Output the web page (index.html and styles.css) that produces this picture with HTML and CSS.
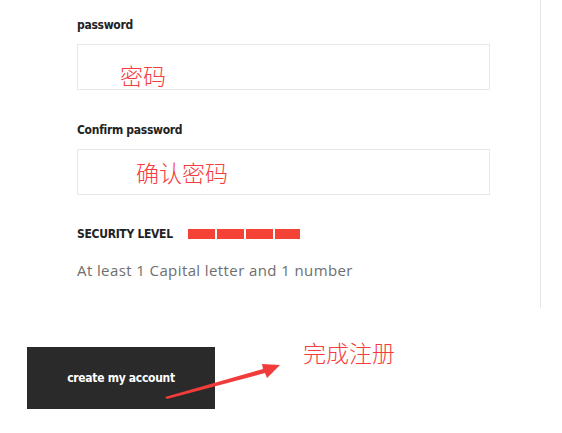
FILE: index.html
```html
<!DOCTYPE html>
<html lang="en">
<head>
    <meta charset="UTF-8">
    <meta name="viewport" content="width=device-width, initial-scale=1.0">
    <title>Create Account</title>
    <link rel="stylesheet" href="styles.css">
</head>
<body>
    <div class="form-panel">
        <div class="form-group">
            <label class="field-label">password</label>
            <div class="field-box first">
                <span class="note">密码</span>
            </div>
        </div>

        <div class="form-group">
            <label class="field-label">Confirm password</label>
            <div class="field-box second">
                <span class="note">确认密码</span>
            </div>
        </div>

        <div class="security">
            <span class="security-title">SECURITY LEVEL</span>
            <div class="security-bars">
                <span></span><span></span><span></span><span></span>
            </div>
        </div>
        <p class="hint">At least 1 Capital letter and 1 number</p>
    </div>

    <div class="form-footer">
        <button type="submit">create my account</button>

        <!-- annotation -->
        <svg class="arrow" width="130" height="50" viewBox="0 0 130 50">
            <polygon points="0,44 98,16 97,11 115,12 102,25 100,20 2,46" fill="#f23c3c"/>
        </svg>
        <span class="note done">完成注册</span>
    </div>
</body>
</html>
```

FILE: styles.css
```css
* {
    margin: 0;
    padding: 0;
    box-sizing: border-box;
}

body {
    background: #fff;
    font-family: 'Open Sans', 'Noto Sans', sans-serif;
}

.form-panel {
    width: 541px;
    height: 308px;
    padding: 14px 0 0 77px;
    border-right: 1px solid #e6e6e6;
}

.form-group {
    width: 413px;
    margin-bottom: 29px;
}

.form-group:last-of-type {
    margin-bottom: 0;
}

.field-label,
.security-title,
.form-footer button {
    font-family: 'DejaVu Sans', sans-serif;
    font-stretch: condensed;
    font-weight: 700;
    font-size: 12px;
    letter-spacing: -0.3px;
    color: #222;
}

.field-label {
    display: block;
    height: 30px;
    line-height: 23px;
}

.field-box {
    height: 46px;
    border: 1px solid #e8e8e8;
    display: flex;
}

.note {
    font-family: 'Noto Sans CJK SC', sans-serif;
    font-size: 23px;
    font-weight: 300;
    color: #f53d3d;
    line-height: 1;
}

.field-box.first {
    padding: 19px 0 0 42px;
}

.field-box.second {
    align-items: center;
    padding-left: 58px;
}

.security {
    display: flex;
    align-items: center;
    margin-top: 25px;
    height: 20px;
}

.security-title {
    flex-shrink: 0;
    width: 111px;
}

.security-bars {
    display: flex;
    gap: 2px;
}

.security-bars span {
    width: 27px;
    height: 10px;
    background: #f44336;
}

.security-bars span:last-child {
    width: 25px;
}

.hint {
    margin-top: 16px;
    font-size: 15px;
    letter-spacing: 0.4px;
    color: #6e6e6e;
}

.form-footer {
    position: relative;
    padding: 39px 0 0 27px;
}

.form-footer button {
    width: 188px;
    height: 62px;
    background: #2a2a2a;
    border: none;
    color: #fff;
}

.arrow {
    position: absolute;
    left: 165px;
    top: 45px;
}

.done {
    position: absolute;
    left: 303px;
    top: 33px;
}
```
